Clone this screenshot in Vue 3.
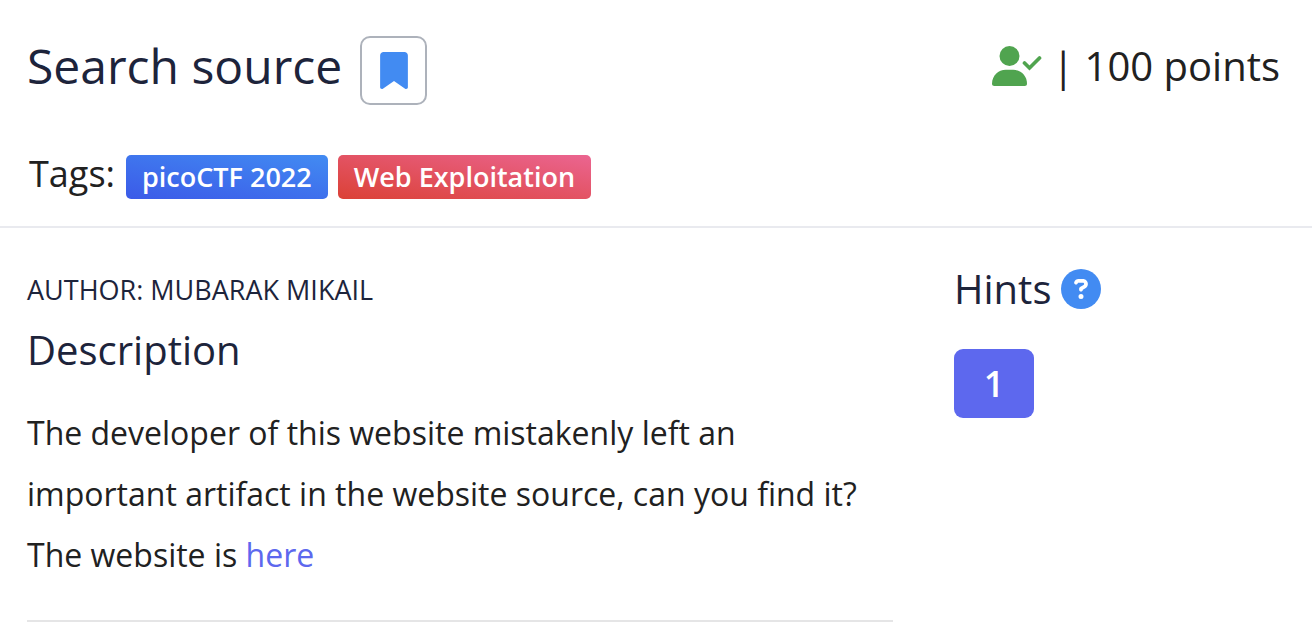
<script setup>
const tags = [
  { name: 'picoCTF 2022', kind: 'event' },
  { name: 'Web Exploitation', kind: 'category' },
]
const hints = [1]
</script>

<template>
  <main class="challenge">
    <header class="head">
      <div class="title-row">
        <h1>Search source</h1>
        <button class="bookmark" type="button" aria-label="Bookmark">
          <svg width="28" height="37" viewBox="0 0 384 512"><path fill="#428bf2" d="M0 48V487.700C0 501.100 10.900 512 24.300 512c5 0 9.900-1.500 14-4.400L192 400 345.700 507.600c4.100 2.900 9 4.400 14 4.400c13.400 0 24.300-10.900 24.300-24.300V48c0-26.500-21.500-48-48-48H48C21.500 0 0 21.500 0 48z" /></svg>
        </button>
        <div class="points">
          <svg width="50" height="40" viewBox="0 0 50 40" aria-label="Solved by you" role="img">
            <circle cx="17.500" cy="10" r="10" fill="#50a44f" />
            <path d="M13.900 23.800H21.100C28.800 23.800 35 30 35 37.700C35 39 34 40 32.700 40H2.300C1 40 0 39 0 37.700C0 30 6.200 23.800 13.900 23.800Z" fill="#50a44f" />
            <path d="M32.500 17L37.500 22L47.500 12" fill="none" stroke="#50a44f" stroke-width="3.700" stroke-linecap="round" />
          </svg>
          <span>| 100 points</span>
        </div>
      </div>
      <div class="tags">
        <span class="label">Tags:</span>
        <span v-for="tag in tags" :key="tag.name" class="tag" :class="tag.kind">{{ tag.name }}</span>
      </div>
    </header>
    <div class="body">
      <section class="details">
        <p class="author">AUTHOR: MUBARAK MIKAIL</p>
        <h2>Description</h2>
        <p class="text">The developer of this website mistakenly left an important artifact in the website source, can you find it?<br />The website is <a href="#">here</a></p>
        <hr />
      </section>
      <aside class="hints">
        <div class="hints-head">
          <h2>Hints</h2>
          <button class="help" type="button" aria-label="About hints">
            <svg width="40" height="40" viewBox="0 0 512 512"><path fill="#fff" d="M169.800 165.300c7.900-22.300 29.100-37.300 52.800-37.300h58.300c34.900 0 63.100 28.300 63.100 63.100c0 22.600-12.100 43.500-31.700 54.800L280 264.400c-.2 13-10.900 23.600-24 23.600c-13.300 0-24-10.700-24-24V250.500c0-8.600 4.600-16.500 12.100-20.800l44.300-25.400c4.700-2.700 7.600-7.700 7.600-13.100c0-8.400-6.800-15.100-15.100-15.100H222.600c-3.400 0-6.400 2.100-7.500 5.300l-.4 1.200c-4.400 12.500-18.200 19-30.600 14.600s-19-18.200-14.600-30.600l.4-1.200zM224 352a32 32 0 1 1 64 0 32 32 0 1 1 -64 0z" /></svg>
          </button>
        </div>
        <button v-for="hint in hints" :key="hint" class="hint" type="button">{{ hint }}</button>
      </aside>
    </div>
  </main>
</template>

<style>
body {
  background: #fff;
}
</style>

<style scoped>
.challenge {
  overflow: hidden;
  color: #212121;
  font-family: "Open Sans", "Noto Sans", sans-serif;
}
h1,
h2,
p {
  margin: 0;
  font-weight: 400;
}
h1,
h2,
.author {
  color: #1d243b;
}
button {
  padding: 0;
  font-family: inherit;
  cursor: pointer;
}
.head {
  padding: 36px 32px 27px 27px;
  border-bottom: 2px solid #e9eaef;
}
.title-row {
  display: flex;
  align-items: flex-start;
}
h1 {
  font-size: 48px;
  line-height: 60px;
}
.bookmark {
  display: flex;
  align-items: center;
  justify-content: center;
  width: 67px;
  height: 69px;
  margin-left: 18px;
  border: 2px solid #adb2bb;
  border-radius: 10px;
  background: #fff;
}
.points {
  display: flex;
  align-items: center;
  gap: 10px;
  margin-left: auto;
  font-size: 40px;
  line-height: 60px;
}
.tags {
  display: flex;
  align-items: flex-start;
  gap: 10px;
  margin-top: 50px;
}
.label {
  padding: 0 1px 0 2px;
  font-size: 36px;
  line-height: 38px;
}
.tag {
  padding: 0 16px;
  border-radius: 5px;
  color: #fff;
  font-size: 27px;
  font-weight: 600;
  line-height: 44px;
}
.event {
  background: linear-gradient(10deg, #3b5ae8, #428bf2);
}
.category {
  background: linear-gradient(10deg, #db4136, #eb6591);
}
.body {
  display: grid;
  grid-template-columns: 866fr 358fr;
  column-gap: 61px;
  padding: 37px 0 0 27px;
}
.author {
  margin-top: 7px;
  font-size: 27px;
  line-height: 36px;
}
h2 {
  font-size: 40px;
  line-height: 48px;
}
.details h2 {
  margin-top: 18px;
}
.text {
  margin-top: 28px;
  font-size: 32px;
  line-height: 61px;
}
a {
  color: #5d68ee;
  text-decoration: none;
}
hr {
  height: 2px;
  margin: 35px 0 0;
  border: 0;
  background: #e5e5e6;
}
.hints-head {
  display: flex;
  align-items: center;
  gap: 10px;
}
.help {
  display: flex;
  border: 0;
  border-radius: 50%;
  background: #428bf2;
}
.hint {
  width: 80px;
  height: 69px;
  margin-top: 36px;
  border: 0;
  border-radius: 9px;
  background: #5d68ee;
  color: #fff;
  font-size: 36px;
  font-weight: 600;
}
</style>
